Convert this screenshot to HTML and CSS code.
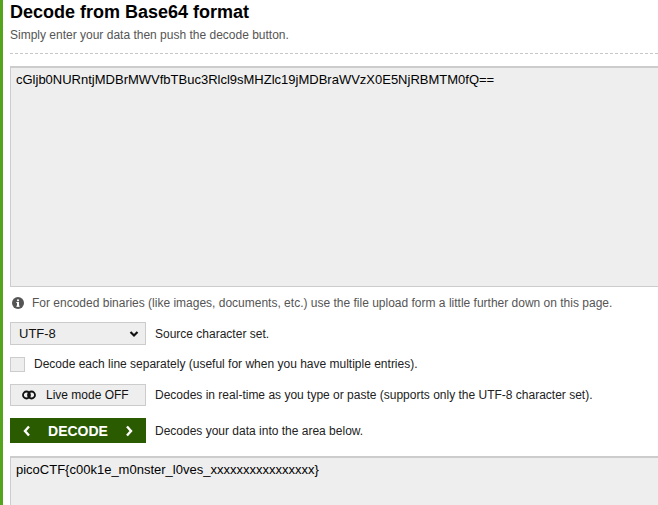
FILE: index.html
```html
<!DOCTYPE html>
<html>
<head>
<meta charset="utf-8">
<link rel="stylesheet" href="styles.css">
</head>
<body>
<div class="page">
  <h1 class="title">Decode from Base64 format</h1>
  <p class="subtitle">Simply enter your data then push the decode button.</p>
  <div class="rule"></div>
  <div class="box input-box">cGljb0NURntjMDBrMWVfbTBuc3Rlcl9sMHZlc19jMDBraWVzX0E5NjRBMTM0fQ==</div>
  <div class="info">
    <svg class="info-icon" width="12" height="12" viewBox="0 0 12 12"><circle cx="6" cy="6" r="6" fill="#555"/><circle cx="6" cy="3.3" r="1.1" fill="#fff"/><rect x="5" y="5" width="2" height="4.6" fill="#fff"/><rect x="4.3" y="5" width="2.7" height="1" fill="#fff"/><rect x="4.3" y="8.7" width="3.4" height="1" fill="#fff"/></svg>
    <span>For encoded binaries (like images, documents, etc.) use the file upload form a little further down on this page.</span>
  </div>
  <div class="row row-select">
    <div class="select"><span>UTF-8</span><svg width="10" height="8" viewBox="0 0 10 8"><path d="M1.5 2 L5 5.5 L8.5 2" fill="none" stroke="#111" stroke-width="2.2"/></svg></div>
    <span class="desc">Source character set.</span>
  </div>
  <div class="row row-check">
    <div class="check"></div>
    <span class="desc">Decode each line separately (useful for when you have multiple entries).</span>
  </div>
  <div class="row row-live">
    <div class="live"><svg width="14" height="10" viewBox="0 0 14 10"><circle cx="4.5" cy="5" r="3.5" fill="none" stroke="#111" stroke-width="1.8"/><circle cx="9.5" cy="5" r="3.5" fill="none" stroke="#111" stroke-width="1.8"/></svg><span>Live mode OFF</span></div>
    <span class="desc">Decodes in real-time as you type or paste (supports only the UTF-8 character set).</span>
  </div>
  <div class="row row-decode">
    <div class="decode"><svg width="8" height="12" viewBox="0 0 8 12"><path d="M6 1.5 L2 6 L6 10.5" fill="none" stroke="#fff" stroke-width="2.4"/></svg><span>DECODE</span><svg width="8" height="12" viewBox="0 0 8 12"><path d="M2 1.5 L6 6 L2 10.5" fill="none" stroke="#fff" stroke-width="2.4"/></svg></div>
    <span class="desc">Decodes your data into the area below.</span>
  </div>
  <div class="box output-box">picoCTF{c00k1e_m0nster_l0ves_xxxxxxxxxxxxxxxx}</div>
</div>
</body>
</html>
```
FILE: styles.css
```css
html, body {
  margin: 0;
  padding: 0;
  background: #fff;
  overflow: hidden;
}
body {
  font-family: "Liberation Sans", Arial, sans-serif;
  color: #222;
}
.page {
  border-left: 3px solid #55a51c;
  padding-left: 7px;
  height: 505px;
  box-sizing: border-box;
  width: 658px;
  overflow: hidden;
}
.title {
  margin: 0;
  font-size: 18px;
  line-height: 24px;
  font-weight: bold;
  color: #000;
}
.subtitle {
  margin: 3px 0 0;
  font-size: 12px;
  line-height: 16px;
  color: #555;
}
.rule {
  margin-top: 10px;
  border-top: 1px dashed #c8c8c8;
}
.box {
  background: #eeeeee;
  border: 1px solid #cccccc;
  border-top: 2px solid #cccccc;
  border-right: none;
  box-sizing: border-box;
  font-size: 13px;
  line-height: 16px;
  padding: 4px 5px 2px;
  color: #000;
}
.input-box {
  margin-top: 12px;
  height: 221px;
}
.info {
  margin-top: 8px;
  display: flex;
  align-items: center;
  gap: 8px;
  font-size: 12px;
  line-height: 16px;
  color: #555;
  padding-left: 2px;
}
.info-icon {
  flex: none;
}
.row {
  display: flex;
  align-items: center;
  gap: 9px;
}
.desc {
  font-size: 12px;
  line-height: 16px;
  color: #222;
  white-space: nowrap;
}
.row-select {
  margin-top: 11px;
}
.select {
  width: 136px;
  height: 23px;
  box-sizing: border-box;
  background: #eee;
  border: 1px solid #ccc;
  display: flex;
  align-items: center;
  justify-content: space-between;
  padding: 0 6px 0 8px;
  font-size: 13px;
  color: #111;
  flex: none;
}
.row-check {
  margin-top: 11px;
}
.check {
  width: 15px;
  height: 15px;
  box-sizing: border-box;
  background: #eee;
  border: 1px solid #ccc;
  flex: none;
}
.row-live {
  margin-top: 12px;
}
.live {
  width: 136px;
  height: 22px;
  box-sizing: border-box;
  background: #eee;
  border: 1px solid #ccc;
  display: flex;
  align-items: center;
  gap: 10px;
  padding-left: 11px;
  font-size: 12px;
  color: #111;
  flex: none;
}
.row-decode {
  margin-top: 12px;
}
.decode {
  width: 136px;
  height: 25px;
  box-sizing: border-box;
  background: #2b5b00;
  display: flex;
  align-items: center;
  justify-content: center;
  gap: 17px;
  font-size: 14px;
  font-weight: bold;
  color: #fff;
  flex: none;
}
.output-box {
  margin-top: 13px;
  height: 60px;
}
```
